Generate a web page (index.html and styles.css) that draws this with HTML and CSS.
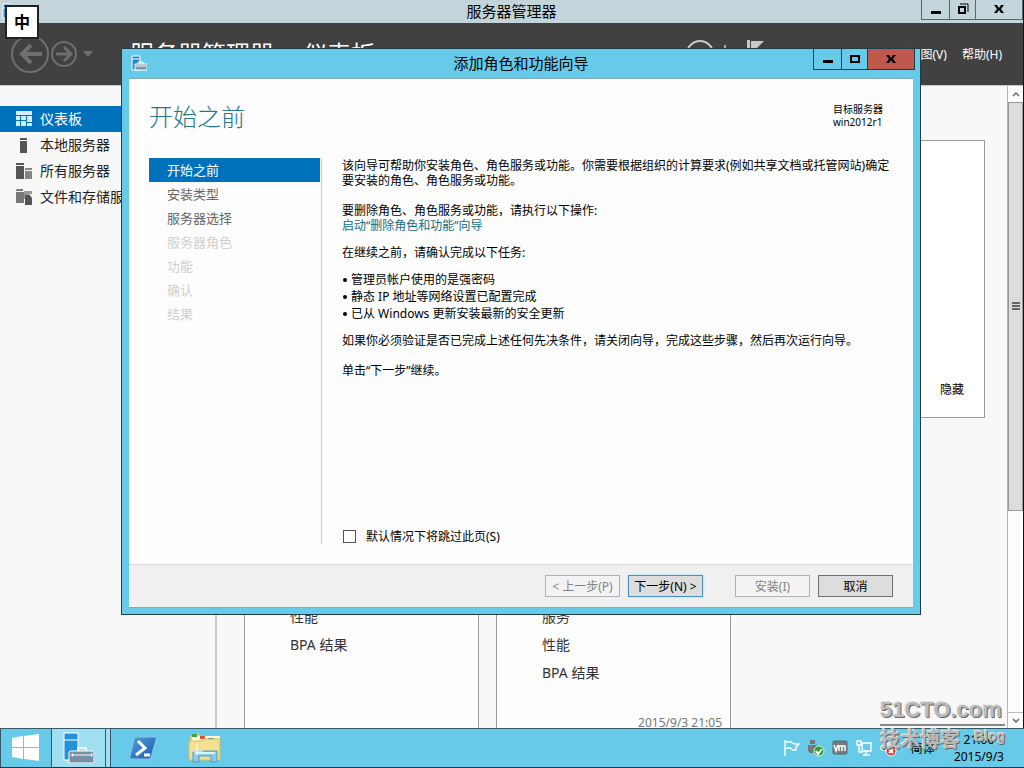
FILE: index.html
```html
<!DOCTYPE html>
<html lang="zh-CN">
<head>
<meta charset="utf-8">
<title>服务器管理器</title>
<link rel="stylesheet" href="styles.css">
</head>
<body>
<div class="desktop">
  <div class="manager">
    <header class="titlebar">
      <svg class="app-icon" viewBox="0 0 16 16"><path d="M1 1h8v14H1z" fill="#2b88c8" stroke="#fff"/><path d="M1 5h8" stroke="#fff"/></svg>
      <h1 class="window-title">服务器管理器</h1>
      <div class="controls">
        <button class="ctl" aria-label="最小化"><svg viewBox="0 0 16 16"><path d="M3 9h10v3H3z"/></svg></button>
        <button class="ctl ctl-mid" aria-label="还原"><svg viewBox="0 0 16 16"><path d="M5 2h8v8" fill="none" stroke="#000"/><path d="M4 5h6v6H4z" fill="none" stroke="#000" stroke-width="2"/></svg></button>
        <button class="ctl ctl-close" aria-label="关闭"><svg viewBox="0 0 16 16"><path d="M3 3h3l2 3 2-3h3l-3 4 3 4h-3L8 8l-2 3H3l3-4z"/></svg></button>
      </div>
    </header>
    <div class="banner">
      <svg class="nav-arrows" viewBox="0 0 90 50"><g fill="none" stroke="#6f6f6f"><circle cx="24" cy="25" r="18" stroke-width="2"/><circle cx="58" cy="25" r="12" stroke-width="2"/><path d="M36 25H15M25 16l-9 9 9 9" stroke-width="4"/><path d="M50 25h14M58 18l7 7-7 7" stroke-width="3"/></g><path d="M77 22h10l-5 6z" fill="#6f6f6f"/></svg>
      <div class="crumbs"><span>服务器管理器</span><span>仪表板</span></div>
      <svg class="status-icons" viewBox="0 0 90 36"><g fill="none" stroke="#c8c8c8"><circle cx="20" cy="18" r="13" stroke-width="2"/><path d="M13 20a7 7 0 0 1 12-4v-4" stroke-width="2"/><path d="M45 9v18" stroke="#aaa" stroke-width="2"/></g><path d="M67 4h3v26h-3zM71 5h13l-7 7 7 7H71z" fill="#c8c8c8"/></svg>
      <nav class="menu"><a href="#">视图(V)</a><a href="#">帮助(H)</a></nav>
    </div>
    <div class="workspace">
      <nav class="sidebar">
        <a class="side-link selected" href="#"><svg viewBox="0 0 16 16" shape-rendering="crispEdges"><path d="M0 0h16v4H0zM0 5h4v4H0zM5 5h5v4H5zM11 5h5v6h-5zM0 10h4v5H0zM5 10h5v5H5zM11 12h5v3h-5z" fill="#d5ebf8"/></svg>仪表板</a>
        <a class="side-link" href="#"><svg viewBox="0 0 16 16"><path d="M4 1h7v2H4zM4 4h7v12H4z" fill="#555"/></svg>本地服务器</a>
        <a class="side-link" href="#"><svg viewBox="0 0 16 16"><path d="M0 0h8v2H0zM0 3h8v13H0z" fill="#555"/><path d="M9 5h7v2H9zM9 8h7v8H9z" fill="#858585"/></svg>所有服务器</a>
        <a class="side-link" href="#"><svg viewBox="0 0 16 16"><path d="M0 1l1-1h6v2H0zM0 3h8v11H0z" fill="#777"/><path d="M8 2h8v8H8z" fill="#999"/><path d="M9 6h5l2 3v7H9z" fill="#555"/><path d="M13 5l3 4v-4z" fill="#eee"/></svg>文件和存储服务</a>
      </nav>
      <main class="dashboard">
        <section class="welcome"><button class="hide-btn">隐藏</button></section>
        <div class="tiles">
          <section class="tile"><a href="#">性能</a><a href="#">BPA 结果</a></section>
          <section class="tile"><a href="#">服务</a><a href="#">性能</a><a href="#">BPA 结果</a><time>2015/9/3 21:05</time></section>
        </div>
      </main>
      <div class="scrollbar">
        <button class="scroll-btn" aria-label="向上滚动"><svg viewBox="0 0 15 16"><path d="M5 10l3-3 3 3" fill="none" stroke="#666" stroke-width="1.5"/></svg></button>
        <div class="track"><div class="thumb"><svg viewBox="0 0 8 9"><path d="M0 0h8v2H0zM0 3h8v2H0zM0 6h8v2H0z" fill="#666"/></svg></div></div>
        <button class="scroll-btn scroll-down" aria-label="向下滚动"><svg viewBox="0 0 15 16"><path d="M5 6l3 3 3-3" fill="none" stroke="#666" stroke-width="1.5"/></svg></button>
      </div>
    </div>
  </div>

  <footer class="taskbar">
    <button class="task start" aria-label="开始"><svg viewBox="0 0 28 28"><path d="M0 4l11-2v11H0zM12 2l15-2v13H12zM0 14h11v11L0 23zM12 14h15v13l-15-2z" fill="#fff"/></svg></button>
    <button class="task active" aria-label="服务器管理器"><svg class="server-icon" viewBox="0 0 32 32"><path d="M1 1h14v27H1z" fill="#2591d9" stroke="#fff"/><path d="M1 8h14" stroke="#fff"/><path d="M6 19h26v13H6z" fill="#6cc9e8"/><path d="M15 19v-3h8v3" fill="none" stroke="#e8f5fa" stroke-width="2"/><path d="M7 19h23l1 1v11H6V20z" fill="#768fa1" stroke="#fff"/><path d="M9 23h20" stroke="#fff"/><path d="M10 21l-2 2 2 2zM28 21l2 2-2 2z" fill="#fff"/></svg></button>
    <span class="stack"></span>
    <button class="task shell" aria-label="PowerShell"><svg viewBox="0 0 28 24"><defs><linearGradient id="ps" x2="1" y2="1"><stop stop-color="#5b9fd8"/><stop offset="1" stop-color="#135bb0"/></linearGradient></defs><path d="M6 1h20q2 0 1 3l-5 17q0 2-3 2H2q-2 0-1-3L5 3q0-2 1-2z" fill="url(#ps)" stroke="#8cc5e6"/><path d="M9 5l7 7-9 7M15 19h6" fill="none" stroke="#fff" stroke-width="3"/></svg></button>
    <button class="task files" aria-label="文件资源管理器"><svg viewBox="0 0 34 30"><path d="M2 4l2-3h7l2 2h17l2 3v21H1z" fill="#e7cb70"/><path d="M4 3h28v5H4z" fill="#fff8d5"/><path d="M4 1h5v3H4z" fill="#40a345"/><path d="M12 3h5v3h-5z" fill="#cf573a"/><path d="M20 5h6v3h-6z" fill="#3385bd"/><path d="M1 8h12l3-2h16v21H1z" fill="#f3e191" stroke="#d6bb60"/><path d="M5 29V18h24v11h-6v-6H11v6z" fill="#8bcbea" stroke="#519bc1"/><path d="M7 20h20" stroke="#d7f4ff" stroke-width="2"/><path d="M9 10v12M4 18h11" stroke="#fff"/></svg></button>
    <div class="tray">
      <svg viewBox="0 0 18 18"><path d="M2 1v16M3 3h5l3 2h5l-3 3v3h-3l-3-2H3" fill="none" stroke="#fff" stroke-width="1.4"/></svg>
      <svg viewBox="0 0 18 18"><path d="M3 1h5v4H3zM1 6h9v6l-2 2H3l-2-2z" fill="#777"/><circle cx="12" cy="12" r="5" fill="#27a033" stroke="#d8f4d9"/><path d="M9 12l2 3 4-5" fill="none" stroke="#fff" stroke-width="2"/></svg>
      <svg viewBox="0 0 18 18"><rect x="2" y="2" width="14" height="13" rx="1" fill="#747d82" stroke="#5c6a70"/><path d="M3 6l2 6 2-6M8 12V7h3v5M11 7h3v5" fill="none" stroke="#fff" stroke-width="1.5"/></svg>
      <svg viewBox="0 0 18 18"><path d="M7 4h9v8H7zM11 12v3M8 16h7M2 2h4v4H2zM4 6v7h4" fill="none" stroke="#fff" stroke-width="1.4"/></svg>
      <svg viewBox="0 0 18 18"><path d="M2 7h4l5-5v14l-5-5H2z" fill="#ddd" stroke="#fff"/><circle cx="12" cy="12" r="5" fill="#d83931" stroke="#fff"/><path d="M10 10l4 4M14 10l-4 4" stroke="#fff" stroke-width="2"/></svg>
      <span class="ime">简体</span>
      <div class="clock"><span class="hour">21:06</span><span>2015/9/3</span></div>
    </div>
  </footer>

  <div class="ime-box">中</div>

  <div class="wizard" role="dialog" aria-labelledby="wizard-title">
    <header class="wizard-bar">
      <svg class="app-icon" viewBox="0 0 16 16"><path d="M1 1h8v14H1z" fill="#2588cf" stroke="#fff"/><path d="M1 4h8" stroke="#fff"/><path d="M7 9V7h5v2" fill="none" stroke="#fff"/><path d="M4 9h12v6H4z" fill="#7896a9" stroke="#fff"/><path d="M5 11h10" stroke="#fff"/></svg>
      <h2 class="window-title" id="wizard-title">添加角色和功能向导</h2>
      <div class="controls">
        <button class="ctl" aria-label="最小化"><svg viewBox="0 0 16 16"><path d="M3 9h10v3H3z"/></svg></button>
        <button class="ctl ctl-mid" aria-label="最大化"><svg viewBox="0 0 16 16"><path d="M4 5h8v6H4z" fill="none" stroke="#000" stroke-width="2"/></svg></button>
        <button class="ctl ctl-close danger" aria-label="关闭"><svg viewBox="0 0 16 16"><path d="M3 4h3l2 3 2-3h3l-3 4 3 4h-3L8 9l-2 3H3l3-4z"/></svg></button>
      </div>
    </header>
    <div class="wizard-page">
      <div class="page-head">
        <h3>开始之前</h3>
        <div class="target"><span>目标服务器</span><span>win2012r1</span></div>
      </div>
      <div class="page-body">
        <nav class="steps">
          <a class="step current" href="#">开始之前</a>
          <a class="step" href="#">安装类型</a>
          <a class="step" href="#">服务器选择</a>
          <a class="step off">服务器角色</a>
          <a class="step off">功能</a>
          <a class="step off">确认</a>
          <a class="step off">结果</a>
        </nav>
        <div class="copy">
          <p>该向导可帮助你安装角色、角色服务或功能。你需要根据组织的计算要求(例如共享文档或托管网站)确定要安装的角色、角色服务或功能。</p>
          <p class="loose">要删除角色、角色服务或功能，请执行以下操作:<br><a href="#">启动“删除角色和功能”向导</a></p>
          <p>在继续之前，请确认完成以下任务:</p>
          <ul>
            <li>管理员帐户使用的是强密码</li>
            <li>静态 IP 地址等网络设置已配置完成</li>
            <li>已从 Windows 更新安装最新的安全更新</li>
          </ul>
          <p>如果你必须验证是否已完成上述任何先决条件，请关闭向导，完成这些步骤，然后再次运行向导。</p>
          <p class="loose">单击“下一步”继续。</p>
          <label class="skip"><input type="checkbox">默认情况下将跳过此页(S)</label>
        </div>
      </div>
      <div class="actions">
        <button class="btn" disabled>&lt; 上一步(P)</button>
        <button class="btn primary">下一步(N) &gt;</button>
        <button class="btn apart" disabled>安装(I)</button>
        <button class="btn">取消</button>
      </div>
    </div>
  </div>

  <div class="watermark">
    <strong>51CTO.com</strong>
    <div class="mark-sub"><span>技术博客</span><em>Blog</em></div>
  </div>
</div>
</body>
</html>
```
FILE: styles.css
```css
* { box-sizing: border-box; }
body {
  margin: 0;
  font-family: "Noto Sans", "Noto Sans CJK SC", sans-serif;
  font-size: 12px;
  line-height: 15px;
  color: #000;
}
button { font: inherit; color: inherit; padding: 0; border: 0; background: none; }
a { color: inherit; text-decoration: none; }
h1, h2, h3, p, ul { margin: 0; padding: 0; font-weight: 400; }
svg { display: block; flex: none; }

.desktop { position: relative; height: 100vh; display: flex; flex-direction: column; overflow: hidden; }
.manager { flex: 1; min-height: 0; display: flex; flex-direction: column; border-right: 1px solid #111; background: #f8f8f8; }

.titlebar { display: grid; grid-template-columns: 1fr auto 1fr; height: 23px; background: #c3d5db; }
.app-icon { width: 16px; height: 16px; }
.titlebar .app-icon { margin: 3px 2px; }
.window-title { font-size: 15px; line-height: 23px; }
.controls { display: flex; justify-self: end; align-self: start; border: 1px solid #59666b; border-top: 0; }
.ctl { width: 27px; height: 19px; display: flex; align-items: center; justify-content: center; }
.ctl svg { width: 16px; height: 16px; }
.ctl-mid { border: solid #59666b; border-width: 0 1px; }
.ctl-close { width: 46px; }

.banner { height: 62px; flex: none; display: flex; align-items: center; background: #414141; color: #fff; padding-right: 21px; }
.nav-arrows { width: 90px; height: 50px; margin-left: 6px; }
.crumbs { display: flex; gap: 29px; font-size: 24px; line-height: 32px; margin-left: 34px; }
.status-icons { width: 90px; height: 36px; margin-left: auto; margin-right: 139px; }
.menu { display: flex; gap: 15px; }

.workspace { flex: 1; min-height: 0; display: flex; border-top: 1px solid #c8c8c8; }
.sidebar { width: 217px; flex: none; padding-top: 20px; border-right: 2px solid #c9c9c9; }
.side-link { display: flex; align-items: center; gap: 8px; height: 26px; padding: 0 0 1px 16px; font-size: 14px; line-height: 14px; color: #222; }
.side-link svg { width: 16px; height: 16px; }
.selected { background: #0072bc; color: #fff; }
.dashboard { flex: 1; min-width: 0; overflow: hidden; padding: 54px 22px 0 27px; }
.welcome { height: 278px; display: flex; justify-content: flex-end; align-items: flex-end; padding: 20px; border: 1px solid #999; background: #fff; }
.tiles { display: flex; gap: 17px; margin-top: 140px; }
.tile { width: 235px; height: 180px; display: flex; flex-direction: column; padding: 44px 8px 3px 45px; border: 1px solid #999; background: #fdfdfd; font-size: 14px; line-height: 28px; color: #333; }
.tile time { margin-top: auto; align-self: flex-end; font-size: 12px; line-height: 22px; color: #777; }

.scrollbar { width: 16px; display: flex; flex-direction: column; border-left: 1px solid #b5b5b5; background: #fdfdfd; }
.scroll-btn { height: 16px; background: #fff; }
.scroll-btn svg { width: 15px; height: 16px; }
.scroll-down { border-top: 1px solid #bbb; }
.track { flex: 1; }
.thumb { height: 67%; display: flex; align-items: center; justify-content: center; border: 1px solid #999; background: #dcdcdc; }
.thumb svg { width: 8px; height: 9px; }

.taskbar { height: 40px; flex: none; display: flex; background: #67cae9; border-top: 1px solid #355b69; border-bottom: 1px solid #16333e; }
.task { display: flex; align-items: center; justify-content: center; }
.start { width: 51px; border-left: 1px solid #355b69; }
.start svg { width: 28px; height: 28px; }
.active { width: 55px; background: #a0def2; border: solid #355b69; border-width: 0 1px; }
.server-icon { width: 32px; height: 32px; }
.stack { width: 5px; background: #a0def2; border-right: 1px solid #355b69; }
.shell { width: 64px; }
.shell svg { width: 28px; height: 24px; }
.files { width: 60px; }
.files svg { width: 34px; height: 30px; }
.tray { display: flex; align-items: center; gap: 6px; margin-left: auto; padding-right: 20px; }
.tray svg { width: 18px; height: 18px; }
.ime { padding: 0 13px 0 8px; }
.clock { display: flex; flex-direction: column; align-items: center; line-height: 17px; }

.ime-box { position: absolute; left: 5px; top: 5px; width: 34px; height: 34px; border: 2px solid #222; background: #fff; font-size: 16px; font-weight: 700; line-height: 30px; text-align: center; }

.wizard { position: absolute; left: 121px; top: 48px; width: calc(100% - 224px); height: calc(100% - 201px); display: flex; flex-direction: column; border: 1px solid #203e49; background: #67cae9; padding: 0 7px 6px; }
.wizard-bar { display: grid; grid-template-columns: 1fr auto 1fr; height: 29px; }
.wizard-bar .app-icon { margin: 6px 2px; }
.wizard-bar .window-title { line-height: 29px; }
.wizard-bar .controls { margin-right: -2px; border-color: #203e49; }
.wizard-bar .ctl { height: 20px; }
.wizard-bar .ctl-mid { border-color: #203e49; }
.danger { background: #c1584e; }
.wizard-page { flex: 1; min-height: 0; display: flex; flex-direction: column; background: #fdfdfd; border: solid #83a9b5; border-width: 1px 0; }
.page-head { display: flex; justify-content: space-between; padding: 22px 30px 0 20px; height: 79px; }
.page-head h3 { font-size: 24px; font-weight: 300; line-height: 32px; color: #267789; }
.target { display: flex; flex-direction: column; font-size: 10px; line-height: 13px; padding-top: 2px; }
.page-body { flex: 1; min-height: 0; display: flex; padding: 0 20px 20px; }
.steps { width: 173px; flex: none; padding-right: 1px; border-right: 1px solid #ccc; }
.step { display: block; height: 24px; padding-left: 18px; font-size: 13px; line-height: 24px; color: #666; }
.current { background: #0072bc; color: #fff; }
.off { color: #d0d0d0; }
.copy { flex: 1; display: flex; flex-direction: column; gap: 11px; padding-left: 20px; }
.copy .loose { margin: 4px 0 1px; }
.copy a { color: #146c80; }
.copy ul { list-style: none; line-height: 17px; }
.copy li { display: flex; align-items: center; gap: 4px; }
.copy li::before { content: ""; width: 4px; height: 4px; margin-left: 1px; border-radius: 50%; background: #000; }
.skip { display: flex; align-items: center; gap: 10px; margin-top: auto; }
.skip input { appearance: none; width: 13px; height: 13px; margin: 0 0 0 1px; border: 1px solid #555; background: #fff; }
.actions { display: flex; justify-content: flex-end; gap: 8px; padding: 10px 20px; border-top: 1px solid #d9d9d9; background: #f0f0f0; }
.btn { width: 75px; height: 22px; padding-top: 1px; border: 1px solid #707070; background: #ddd; line-height: 19px; white-space: nowrap; }
.btn:disabled { border-color: #adb2b5; background: #f3f3f3; color: #838383; }
.primary { border-color: #4a90c4; box-shadow: 0 0 1px 1px #cdeefd; }
.apart { margin-left: 24px; }

.watermark { position: absolute; right: 19px; bottom: 14px; width: 125px; color: #b9b9b9; text-shadow: 1px 1px 0 #666, -1px -1px 0 #e5e5e5; }
.watermark strong { display: block; border-bottom: 2px solid #888; font-family: "Liberation Sans", sans-serif; font-size: 22px; line-height: 29px; white-space: nowrap; }
.mark-sub { display: flex; justify-content: space-between; font-size: 20px; font-weight: 700; line-height: 28px; }
.mark-sub em { font-family: "Liberation Sans", sans-serif; font-size: 14px; font-style: normal; line-height: 20px; }
```
